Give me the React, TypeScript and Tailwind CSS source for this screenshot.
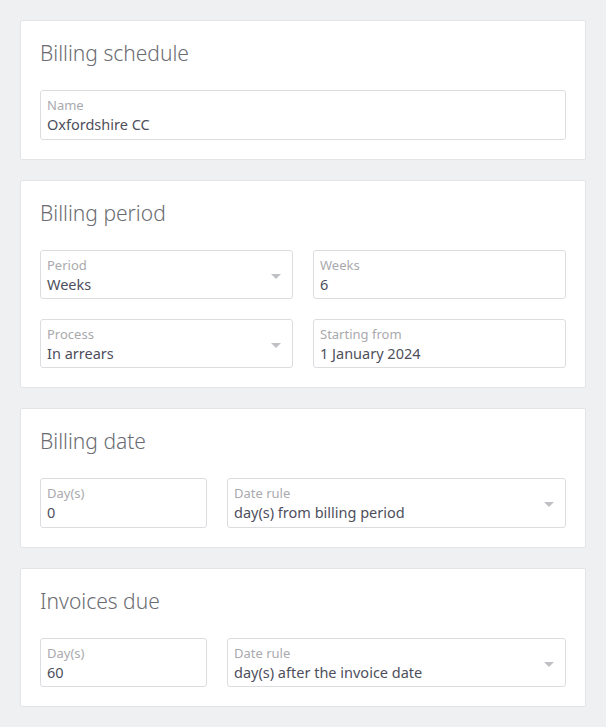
import React from "react";

const font = { fontFamily: '"Noto Sans", "Open Sans", sans-serif' };

function Field({ label, value, select }: { label: string; value: string; select?: boolean }) {
  return (
    <div className="relative h-[49.5px] rounded-[3px] border border-[#dcdde0] bg-white px-[6px] pt-[5px]">
      <div className="text-[13px] leading-[18px] text-[#a9aaae]">{label}</div>
      <div className="text-[14.5px] leading-[20px] text-[#4e4f5c]">{value}</div>
      {select && (
        <svg className="absolute right-[11px] top-[23px]" width="10" height="5" viewBox="0 0 10 5">
          <path d="M0 0h10L5 5z" fill="#c0c1c4" />
        </svg>
      )}
    </div>
  );
}

function Card({ title, children }: { title: string; children: React.ReactNode }) {
  return (
    <div className="rounded-[2px] border border-[#e3e4e7] bg-white px-[19px] pb-[19px] pt-[19px]">
      <div className="mb-[20px] h-[30px] text-[21px] font-light leading-[26px] text-[#6b6c72]">{title}</div>
      {children}
    </div>
  );
}

export default function App() {
  return (
    <div className="min-h-[727px] bg-[#eff0f2] p-5" style={font}>
      <div className="flex flex-col gap-5">
        <Card title="Billing schedule">
          <Field label="Name" value="Oxfordshire CC" />
        </Card>
        <Card title="Billing period">
          <div className="grid grid-cols-2 gap-x-[20px] gap-y-[19.5px]">
            <Field label="Period" value="Weeks" select />
            <Field label="Weeks" value="6" />
            <Field label="Process" value="In arrears" select />
            <Field label="Starting from" value="1 January 2024" />
          </div>
        </Card>
        <Card title="Billing date">
          <div className="grid grid-cols-[167px_1fr] gap-x-5">
            <Field label="Day(s)" value="0" />
            <Field label="Date rule" value="day(s) from billing period" select />
          </div>
        </Card>
        <Card title="Invoices due">
          <div className="grid grid-cols-[167px_1fr] gap-x-5">
            <Field label="Day(s)" value="60" />
            <Field label="Date rule" value="day(s) after the invoice date" select />
          </div>
        </Card>
      </div>
    </div>
  );
}
